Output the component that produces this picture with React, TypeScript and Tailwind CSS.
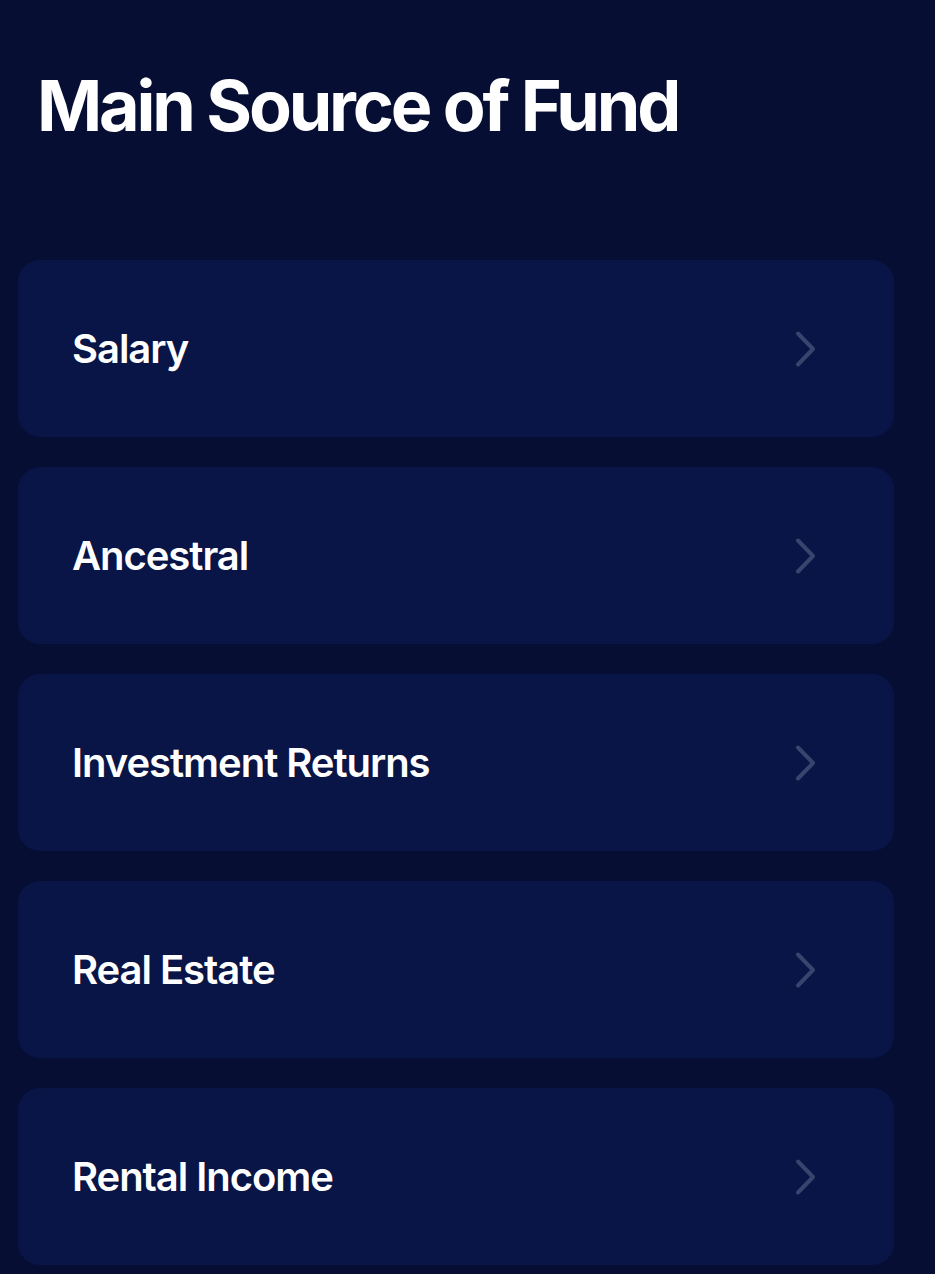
const sources = ["Salary", "Ancestral", "Investment Returns", "Real Estate", "Rental Income"] as const;

function Chevron() {
  return (
    <svg width="24" height="40" viewBox="0 0 24 40" fill="none" className="shrink-0">
      <path
        d="M4 4.5 L19 20 L4 35.5"
        stroke="#38446d"
        strokeWidth="4"
        strokeLinecap="round"
        strokeLinejoin="round"
      />
    </svg>
  );
}

export default function App() {
  return (
    <div
      className="min-h-[1274px] w-full bg-[#060f33] pl-[18px] pr-[41px]"
      style={{ fontFamily: "Inter, 'Noto Sans', sans-serif" }}
    >
      <h1 className="pl-[19px] pt-[66px] text-[70px] font-bold leading-[80px] tracking-[-0.045em] text-white">
        Main Source of Fund
      </h1>

      <ul className="mt-[114px] flex flex-col gap-[30px]">
        {sources.map((s) => (
          <li
            key={s}
            className="flex h-[177px] items-center justify-between rounded-[22px] bg-[#081546] pl-[54px] pr-[76px]"
          >
            <span className="text-[40px] font-semibold tracking-[-0.026em] text-white">{s}</span>
            <Chevron />
          </li>
        ))}
      </ul>
    </div>
  );
}
